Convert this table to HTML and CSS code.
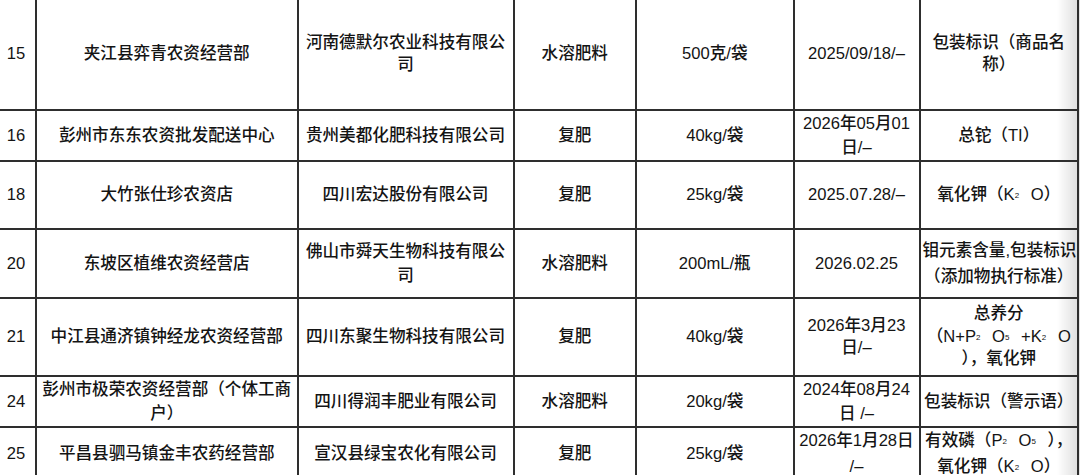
FILE: index.html
```html
<!DOCTYPE html>
<html lang="zh-CN">
<head>
<meta charset="utf-8">
<title>抽检结果</title>
<link rel="stylesheet" href="styles.css">
</head>
<body>
<div class="page">
<table class="grid">
<colgroup>
<col class="c-no"><col class="c-shop"><col class="c-maker"><col class="c-type"><col class="c-spec"><col class="c-date"><col class="c-item">
</colgroup>
<tbody>
<tr class="r15">
<td>15</td>
<td>夹江县弈青农资经营部</td>
<td class="lh22">河南德默尔农业科技有限公<br>司</td>
<td>水溶肥料</td>
<td>500克/袋</td>
<td>2025/09/18/–</td>
<td class="item lh22">包装标识（商品名<br>称）</td>
</tr>
<tr class="r16">
<td>16</td>
<td>彭州市东东农资批发配送中心</td>
<td>贵州美都化肥科技有限公司</td>
<td>复肥</td>
<td>40kg/袋</td>
<td>2026年05月01<br>日/–</td>
<td class="item">总铊（TI）</td>
</tr>
<tr class="r18">
<td>18</td>
<td>大竹张仕珍农资店</td>
<td>四川宏达股份有限公司</td>
<td>复肥</td>
<td>25kg/袋</td>
<td>2025.07.28/–</td>
<td class="item">氧化钾（K<sub>2</sub> O）</td>
</tr>
<tr class="r20">
<td>20</td>
<td>东坡区植维农资经营店</td>
<td>佛山市舜天生物科技有限公<br>司</td>
<td>水溶肥料</td>
<td>200mL/瓶</td>
<td>2026.02.25</td>
<td class="item lh26">钼元素含量,包装标识<br>（添加物执行标准）</td>
</tr>
<tr class="r21">
<td>21</td>
<td>中江县通济镇钟经龙农资经营部</td>
<td>四川东聚生物科技有限公司</td>
<td>复肥</td>
<td>40kg/袋</td>
<td class="lh23">2026年3月23<br>日/–</td>
<td class="item lh23">总养分<br>（N+P<sub>2</sub> O<sub>5</sub> +K<sub>2</sub> O<br>），氧化钾</td>
</tr>
<tr class="r24">
<td>24</td>
<td>彭州市极荣农资经营部（个体工商<br>户）</td>
<td>四川得润丰肥业有限公司</td>
<td>水溶肥料</td>
<td>20kg/袋</td>
<td>2024年08月24<br>日 /–</td>
<td class="item">包装标识（警示语）</td>
</tr>
<tr class="r25">
<td>25</td>
<td>平昌县驷马镇金丰农药经营部</td>
<td>宣汉县绿宝农化有限公司</td>
<td>复肥</td>
<td>25kg/袋</td>
<td class="lh26">2026年1月28日<br>/–</td>
<td class="item lh26">有效磷（P<sub>2</sub> O<sub>5</sub> ），<br>氧化钾（K<sub>2</sub> O）</td>
</tr>
</tbody>
</table>
</div>
</body>
</html>
```

FILE: styles.css
```css
html, body {
  margin: 0;
  padding: 0;
  background: #ffffff;
}

body {
  width: 1080px;
  height: 475px;
  overflow: hidden;
  font-family: "Liberation Sans", "Noto Sans CJK SC", sans-serif;
  font-size: 16.6px;
  font-weight: 500;
  color: #141414;
}

.page {
  width: 1080px;
  height: 475px;
  overflow: hidden;
  background: #e4e4e4;
}

.grid {
  border-collapse: collapse;
  table-layout: fixed;
  width: 1083px;
  margin: -4px 0 0 -5px;
  background: #ffffff;
}

.c-no { width: 40px; }
.c-shop { width: 261.5px; }
.c-maker { width: 216px; }
.c-type { width: 122.5px; }
.c-spec { width: 157.5px; }
.c-date { width: 126px; }
.c-item { width: 158.5px; }

.grid td {
  border: 2px solid #2e2e2e;
  padding: 0 2px;
  text-align: center;
  vertical-align: middle;
  line-height: 24px;
  white-space: nowrap;
  overflow: hidden;
}

.grid td.item {
  background: linear-gradient(to right, rgba(0,0,0,0) 0, rgba(0,0,0,0) calc(100% - 20px), rgba(0,0,0,0.12) 100%);
}

.grid td.lh22 { line-height: 22px; }
.grid td.lh23 { line-height: 22.5px; }
.grid td.lh26 { line-height: 26px; }

.grid sub {
  font-size: 8px;
  vertical-align: 2px;
  line-height: 0;
  margin-right: 7px;
}

.r15 { height: 113px; }
.r16 { height: 51px; }
.r18 { height: 68px; }
.r20 { height: 69px; }
.r21 { height: 78px; }
.r24 { height: 51px; }
.r25 { height: 52px; }
```
